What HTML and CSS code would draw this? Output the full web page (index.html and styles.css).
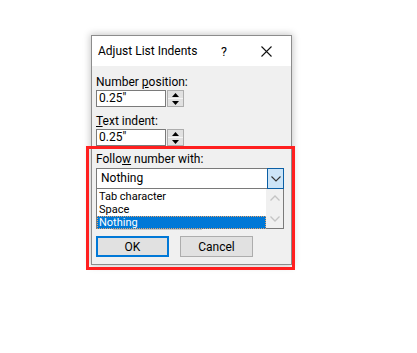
FILE: index.html
```html
<!DOCTYPE html>
<html>
<head>
<meta charset="utf-8">
<link rel="stylesheet" href="styles.css">
</head>
<body>
<div class="dialog">
  <div class="titlebar">
    <span class="title">Adjust List Indents</span>
    <span class="help">?</span>
    <span class="close"><svg width="11" height="11" viewBox="0 0 11 11"><path d="M0.5 0.5 L10.5 10.5 M10.5 0.5 L0.5 10.5" stroke="#111" stroke-width="1.1" fill="none"/></svg></span>
  </div>
  <div class="content">
    <div class="label">Number <u>p</u>osition:</div>
    <div class="spinfield">
      <div class="field">0.25"</div>
      <div class="spin">
        <div class="half"><svg width="7" height="4" viewBox="0 0 7 4"><path d="M0 4 L3.5 0 L7 4 Z" fill="#000"/></svg></div>
        <div class="half"><svg width="7" height="4" viewBox="0 0 7 4"><path d="M0 0 L3.5 4 L7 0 Z" fill="#000"/></svg></div>
      </div>
    </div>
    <div class="label gap"><u>T</u>ext indent:</div>
    <div class="spinfield">
      <div class="field">0.25"</div>
      <div class="spin">
        <div class="half"><svg width="7" height="4" viewBox="0 0 7 4"><path d="M0 4 L3.5 0 L7 4 Z" fill="#000"/></svg></div>
        <div class="half"><svg width="7" height="4" viewBox="0 0 7 4"><path d="M0 0 L3.5 4 L7 0 Z" fill="#000"/></svg></div>
      </div>
    </div>
    <div class="label gap2">Follo<u>w</u> number with:</div>
    <div class="comboarea">
      <div class="combo">
        <div class="combovalue">Nothing</div>
        <div class="dropbtn"><svg width="10" height="6" viewBox="0 0 10 6"><path d="M0.5 0.5 L5 5 L9.5 0.5" stroke="#333" stroke-width="1.1" fill="none"/></svg></div>
      </div>
      <div class="ghost"></div>
      <div class="listbox">
        <div class="items">
          <div class="item">Tab character</div>
          <div class="item">Space</div>
          <div class="item selected">Nothing</div>
        </div>
        <div class="scrollbar">
          <svg width="10" height="6" viewBox="0 0 10 6"><path d="M0.5 5.5 L5 1 L9.5 5.5" stroke="#c4c4c4" stroke-width="1.3" fill="none"/></svg>
          <svg width="10" height="6" viewBox="0 0 10 6"><path d="M0.5 0.5 L5 5 L9.5 0.5" stroke="#c4c4c4" stroke-width="1.3" fill="none"/></svg>
        </div>
      </div>
    </div>
    <div class="buttons">
      <div class="btn ok">OK</div>
      <div class="btn">Cancel</div>
    </div>
  </div>
</div>
<div class="highlight"></div>
</body>
</html>
```
FILE: styles.css
```css
html, body {
  margin: 0;
  padding: 0;
  background: #fff;
}
body {
  width: 417px;
  height: 353px;
  position: relative;
  font-family: Roboto, "Noto Sans", sans-serif;
  font-size: 12px;
  color: #000;
  overflow: hidden;
}
.dialog {
  margin-left: 91px;
  margin-top: 35px;
  width: 199px;
  height: 228px;
  border: 1px solid #8c8c8c;
  background: #f0f0f0;
  box-shadow: 0 0 7px 1px rgba(0,0,0,0.22);
  display: flex;
  flex-direction: column;
}
.titlebar {
  height: 30px;
  background: #fff;
  display: flex;
  align-items: center;
  padding-left: 6px;
}
.title {
  width: 123px;
  font-size: 12px;
}
.help {
  width: 40px;
  font-size: 12.5px;
}
.close {
  display: flex;
  align-items: center;
}
.content {
  padding: 8px 0 0 4px;
  display: flex;
  flex-direction: column;
}
.label {
  height: 16px;
  line-height: 16px;
}
.gap { margin-top: 6px; }
.gap2 { margin-top: 5px; margin-bottom: 1px; }
.spinfield {
  display: flex;
  width: 88px;
  height: 17px;
}
.field {
  width: 68px;
  border: 1px solid #7a7a7a;
  background: #fff;
  line-height: 15px;
  padding-left: 2px;
}
.spin {
  width: 15px;
  margin-left: 1px;
  border: 1px solid #adadad;
  display: flex;
  flex-direction: column;
  background: #fff;
}
.half {
  flex: 1;
  background: #e1e1e1;
  display: flex;
  align-items: center;
  justify-content: center;
}
.half + .half { border-top: 1px solid #f5f5f5; }
.comboarea {
  position: relative;
  width: 188px;
}
.combo {
  height: 21px;
  width: 188px;
  box-sizing: border-box;
  border: 1px solid #7a7a7a;
  background: #fff;
  display: flex;
}
.combovalue {
  flex: 1;
  line-height: 19px;
  padding-left: 4px;
}
.dropbtn {
  width: 15px;
  border: 1px solid #0b5fa5;
  margin: -1px -1px -1px 0;
  background: #cce4f7;
  display: flex;
  align-items: center;
  justify-content: center;
}
.ghost {
  margin-left: 17px;
  width: 89px;
  height: 40px;
  border-bottom: 1px solid #c8c8c8;
}
.listbox {
  position: absolute;
  left: 0;
  top: 21px;
  width: 188px;
  height: 40px;
  box-sizing: border-box;
  border: 1px solid #7a7a7a;
  border-top: none;
  background: #fff;
  display: flex;
}
.items {
  flex: 1;
  padding-top: 1px;
}
.item {
  height: 13px;
  line-height: 13px;
  padding-left: 2px;
  font-size: 11px;
}
.item.selected {
  background: #0078d7;
  color: #fff;
  outline: 1px dotted #e8a36a;
  outline-offset: -1px;
}
.scrollbar {
  width: 17px;
  background: #f0f0f0;
  display: flex;
  flex-direction: column;
  align-items: center;
  justify-content: space-between;
  padding: 6px 0 6px;
  box-sizing: border-box;
}
.buttons {
  display: flex;
  gap: 11px;
  margin-top: 6px;
}
.btn {
  width: 73px;
  height: 21px;
  box-sizing: border-box;
  border: 1px solid #adadad;
  background: #e1e1e1;
  display: flex;
  align-items: center;
  justify-content: center;
}
.btn.ok {
  border: 2px solid #0078d7;
}
.highlight {
  position: absolute;
  left: 86px;
  top: 146px;
  width: 203px;
  height: 118px;
  border: 3px solid #ff1f1f;
}
```
